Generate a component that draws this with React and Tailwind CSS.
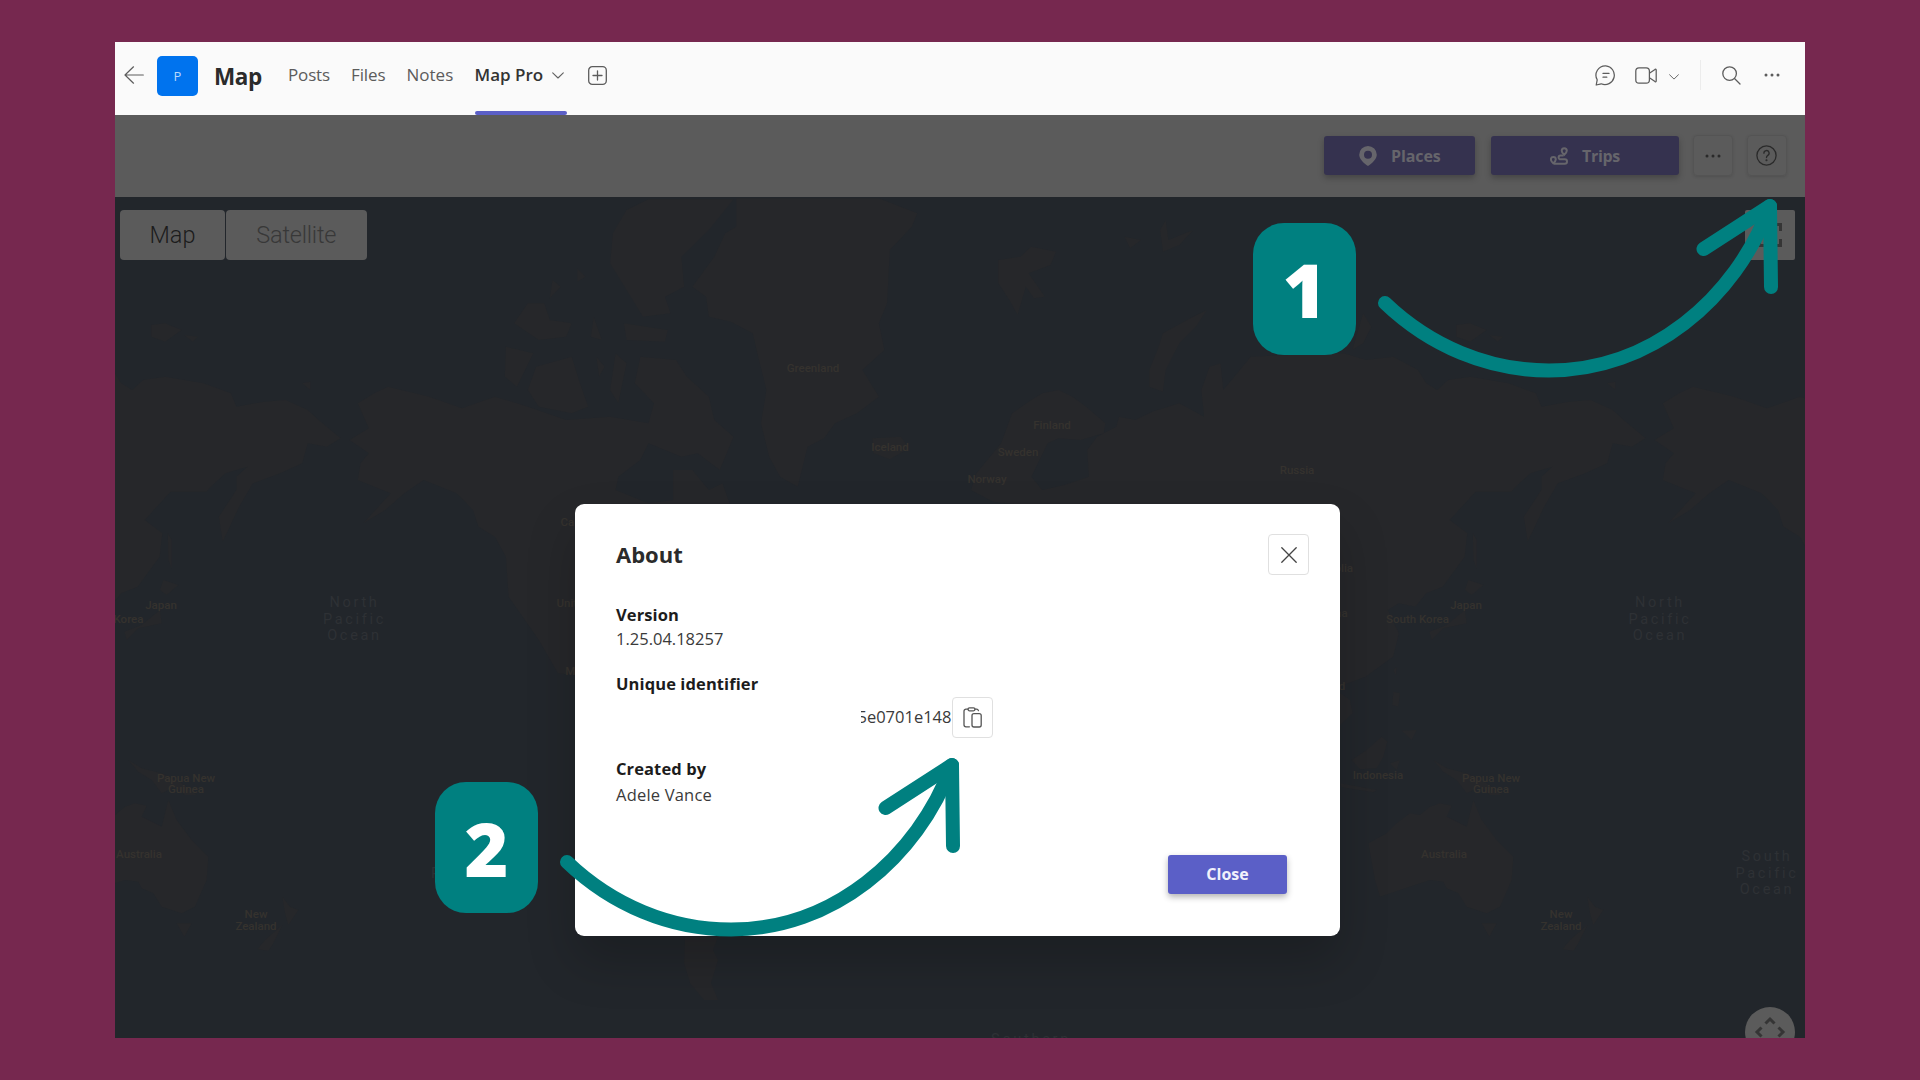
import React from 'react';

const LAND = '#26272a';

const LABELS = [
  [813, 368, 'Greenland'],
  [890, 447, 'Iceland'],
  [1052, 425, 'Finland'],
  [1018, 452, 'Sweden'],
  [987, 479, 'Norway'],
  [1297, 470, 'Russia'],
  [1466, 605, 'Japan'],
  [1417.5, 618.5, 'South Korea'],
  [1378, 774.5, 'Indonesia'],
  [1491, 777.5, 'Papua New'],
  [1491, 789, 'Guinea'],
  [1444, 854, 'Australia'],
  [1561, 914, 'New'],
  [1561, 926, 'Zealand'],
  [161, 605, 'Japan'],
  [112, 618.5, 'South Korea'],
  [186, 777.5, 'Papua New'],
  [186, 789, 'Guinea'],
  [139, 854, 'Australia'],
  [256, 914, 'New'],
  [256, 926, 'Zealand'],
  [580, 522, 'Canada'],
  [591, 603, 'United States'],
  [584, 671, 'Mexico'],
  [1329, 568, 'Mongolia'],
  [1333, 613, 'China'],
  [1323, 686, 'Thailand'],
];

const OCEANS = [
  [354.5, 601, 'North'],
  [354.5, 618, 'Pacific'],
  [354.5, 634.5, 'Ocean'],
  [1660, 601, 'North'],
  [1660, 618, 'Pacific'],
  [1660, 634.5, 'Ocean'],
  [1767, 855, 'South'],
  [1767, 872, 'Pacific'],
  [1767, 888.5, 'Ocean'],
  [437, 872, 'P'],
  [1031, 1038, 'Southern'],
];

const World = () => (
  <g id="world" fill={LAND}>
    {/* Eurasia, Svalbard, Novaya Zemlya */}
    <g transform="translate(960 190) scale(.5485 .3333)">
      <path d="M20 900L30 850L75 760L95 670L130 630L150 610L180 600L205 620L230 650L265 700L262 730L220 750L180 745L160 760L130 860L150 900L190 885L235 860L232 780L250 740L285 710L290 680L320 690L350 665L400 640L445 680L440 600L455 530L475 520L480 600L500 560L530 500L600 495L700 490L740 510L790 500L835 540L850 580L870 600L890 570L930 560L1000 580L1050 610L1060 650L1110 635L1150 630L1190 660L1210 690L1250 745L1225 770L1190 760L1180 820L1140 850L1090 880L1065 950L1035 1055L1028 980L1060 900L1060 860L1080 830L1040 850L1020 880L1005 905L940 905L915 950L893 990L925 1030L920 1100L880 1190L850 1210L830 1250L800 1240L780 1260L800 1330L790 1400L740 1460L692 1490L500 1500L400 1000L60 935Z" />
      <path d="M450 360L430 410L400 460L375 540L370 605L345 590L345 540L360 480L370 430L420 385Z" />
      <path d="M70 210L110 200L130 170L175 185L165 225L125 250L155 320L135 325L120 290L105 375L90 330L70 280Z" />
      <path d="M735 370L750 410L735 460L715 480ZM905 405L930 400L960 420L930 455L905 440ZM965 435L990 440L980 455ZM300 140L330 150L310 175ZM365 120L375 90L380 150L425 120L400 165L370 185ZM1180 580L1195 575L1195 600Z" />
      <path d="M935 1030L942 1050L942 1135L936 1110Z" />
    </g>
    {/* Oceania and South-East Asia */}
    <g transform="translate(1300 560) scale(.3333)">
      <path d="M205 850L260 820L290 790L330 760L360 765L390 740L420 730L455 737L440 770L500 800L520 720L545 780L590 840L640 890L635 960L600 1040L560 1060L500 1040L475 1000L440 985L430 965L390 960L300 990L240 1010L225 960Z" />
      <path d="M545 1090L590 1090L568 1130ZM862 1010L885 1040L910 1050L880 1095L870 1060ZM862 1095L835 1150L820 1172L787 1168L810 1140Z" />
      <path d="M400 600L440 625L500 640L560 670L605 705L570 705L540 680L500 700L470 660L430 635ZM155 600L200 570L245 530L262 545L250 590L230 625L180 628ZM280 395L300 400L295 440L277 435ZM305 512L350 510L335 540ZM270 610L300 600L290 630ZM120 670L230 690L220 697L125 682Z" />
      <path d="M505 60L550 75L515 105L495 90ZM495 150L500 190L430 205L395 240L388 215L440 195ZM280 330L290 320L288 345ZM115 395L150 420L158 460L120 495Z" />
    </g>
  </g>
);

const Americas = () => (
  <g id="americas" fill={LAND}>
    <g transform="translate(100 190) scale(.5485 .3333)">
      <path d="M470 640L500 610L525 590L600 620L660 655L720 620L780 650L850 690L930 680L1000 700L1010 640L975 580L985 500L1050 510L1070 560L1110 620L1120 690L1155 740L1130 840L1090 790L1060 800L1000 760L985 810L945 860L940 900L1000 940L1045 930L1045 840L1080 840L1110 900L1135 880L1150 950L1100 1000L1100 1500L835 1450L800 1350L745 1220L740 1100L720 1040L690 1010L680 960L650 910L590 870L555 910L520 960L480 1000L530 910L500 890L470 870L475 820L490 790L455 750L490 715Z" />
      <path d="M1160 25L1420 25L1490 70L1480 110L1440 180L1435 340L1420 400L1430 480L1390 540L1420 620L1380 670L1340 700L1320 745L1290 770L1272 890L1240 860L1220 800L1205 700L1215 600L1200 500L1190 430L1150 395L1110 380L1105 320L1080 290L1120 200L1140 130L1160 110Z" />
      <path d="M960 60L1000 28L1155 28L1110 120L1060 200L1065 290L1030 320L1040 370L990 380L960 300L930 220L935 130Z" />
      <path d="M755 400L780 340L810 340L820 390L860 400L850 440L800 450ZM870 235L885 260L870 275ZM825 270L840 290L820 325ZM740 470L790 490L760 590L738 560ZM795 530L860 500L875 580L890 650L860 670L800 650L780 600ZM955 400L1035 420L1030 455L960 450ZM900 380L915 450L895 440ZM905 500L920 530L910 560ZM940 490L960 520L945 640L930 600Z" />
      <path d="M1408 745L1460 740L1475 775L1440 808L1410 790Z" />
    </g>
    <path d="M685 937H718L713 950L718 960L711 983L718 1000L704 1000L690 983L684 963Z" />
  </g>
);

const WorldMap = () => (
  <svg className="block h-full w-full" viewBox="115 197 1690 841" preserveAspectRatio="none">
    <World />
    <use href="#world" x="-1305" />
    <Americas />
    <use href="#americas" x="1305" />
    <g fontFamily="Roboto, sans-serif" textAnchor="middle">
      {LABELS.map(([x, y, name]) => (
        <text key={`${name}-${x}`} x={x} y={y + 4} fontSize="11.5" fontWeight="500" fill="#35322e">
          {name}
        </text>
      ))}
      {OCEANS.map(([x, y, name]) => (
        <text key={`${name}-${x}-${y}`} x={x} y={y + 5.5} fontSize="14.5" letterSpacing="2.7" fill="#2e3135">
          {name}
        </text>
      ))}
    </g>
  </svg>
);

const Chevron = ({ className }) => (
  <svg className={className} viewBox="0 0 12 7" fill="none" stroke="currentColor" strokeWidth="1.1" strokeLinecap="round" strokeLinejoin="round">
    <path d="M.7.8L6 6L11.3.8" />
  </svg>
);

const Dots = ({ className }) => (
  <svg className={className} viewBox="0 0 16 4" fill="currentColor">
    <circle cx="2" cy="2" r="1.5" />
    <circle cx="8" cy="2" r="1.5" />
    <circle cx="14" cy="2" r="1.5" />
  </svg>
);

const Header = () => (
  <header className="flex h-[73px] shrink-0 items-start bg-[#fafafa] text-[17px] leading-6 text-[#5c5c5c]">
    <svg className="mt-6 ml-[9px] h-[18px] w-5" viewBox="0 0 20 18" fill="none" stroke="#5c5c5c" strokeWidth="1.2" strokeLinecap="round" strokeLinejoin="round">
      <path d="M9.5.8L1 9L9.5 17.2M1 9H19.3" />
    </svg>
    <div className="mt-[13.5px] ml-[13px] flex h-10 w-[41px] items-center justify-center rounded-[5px] bg-[#0073ee] text-[13px] text-[#b9d9fb]">
      P
    </div>
    <h1 className="mt-[19px] ml-4 w-[74px] text-[22.5px] leading-8 font-bold tracking-[-0.4px] text-[#2b2b2b]">Map</h1>
    <span className="mt-[21px] w-[63px] tracking-[-0.15px]">Posts</span>
    <span className="mt-[21px] w-[55.5px] tracking-[-0.1px]">Files</span>
    <span className="mt-[21px] w-[68px]">Notes</span>
    <div className="flex h-[72.5px] w-[92px] flex-col justify-between">
      <div className="mt-[21px] flex items-center gap-2 whitespace-nowrap text-[#333]">
        <span className="w-[69px] font-semibold">Map Pro</span>
        <Chevron className="h-[7px] w-3 text-[#616161]" />
      </div>
      <div className="h-1 rounded-full bg-[#5b5fc7]" />
    </div>
    <svg className="mt-[23.5px] ml-[21px] h-[19px] w-[19px]" viewBox="0 0 19 19" fill="none" stroke="#5c5c5c" strokeWidth="1.3" strokeLinecap="round">
      <rect x=".7" y=".7" width="17.6" height="17.6" rx="3.6" />
      <path d="M9.5 5V14M5 9.5H14" />
    </svg>

    <div className="mr-[25px] ml-auto flex h-[66px] items-center text-[#5c5c5c]">
      <svg className="h-[21px] w-[21px]" viewBox="0 0 21 21" fill="none" stroke="currentColor" strokeWidth="1.25" strokeLinecap="round" strokeLinejoin="round">
        <path d="M10.8.8A9.4 9.4 0 1 1 6.2 18.8L1.2 20L2.2 14.8A9.4 9.4 0 0 1 10.8.8ZM8 8.4H14M8 12.2H11.8" />
      </svg>
      <svg className="ml-[19px] h-[17px] w-[22px]" viewBox="0 0 22 17" fill="none" stroke="currentColor" strokeWidth="1.25" strokeLinejoin="round">
        <rect x=".8" y=".8" width="13.6" height="15.4" rx="3.2" />
        <path d="M14.4 6.2L20 2.4Q21.2 1.8 21.2 3V14Q21.2 15.2 20 14.6L14.4 10.8" />
      </svg>
      <Chevron className="mt-1 ml-3 h-[6px] w-[10px]" />
      <div className="ml-[21px] h-[30px] w-px bg-[#ececec]" />
      <svg className="ml-[21px] h-[19px] w-[19px]" viewBox="0 0 19 19" fill="none" stroke="currentColor" strokeWidth="1.3" strokeLinecap="round">
        <circle cx="7.6" cy="7.6" r="6.8" />
        <path d="M12.5 12.5L18 18" />
      </svg>
      <Dots className="ml-[23px] h-1 w-4" />
    </div>
  </header>
);

const Toolbar = () => (
  <div className="flex h-[82px] shrink-0 items-center justify-end bg-[#5b5b5b] pr-[18px] pb-px text-[16px] font-bold text-[#66656b]">
    <div className="mr-4 flex h-[39px] w-[151px] items-center rounded-[3px] bg-[#35324f] pl-[35px] shadow-[0_3px_6px_rgba(0,0,0,0.25)]">
      <svg className="h-5 w-[18px]" viewBox="0 0 18 20" fill="currentColor" fillRule="evenodd">
        <path d="M9 0A8.8 8.8 0 0 1 17.8 8.8C17.8 13 13 17.6 9 20C5 17.6.2 13 .2 8.8A8.8 8.8 0 0 1 9 0ZM9 4.8A4 4 0 1 0 9 12.8A4 4 0 1 0 9 4.8Z" />
      </svg>
      <span className="ml-[14px] tracking-[-0.1px]">Places</span>
    </div>
    <div className="mr-[14px] flex h-[39px] w-[188px] items-center rounded-[3px] bg-[#35324f] pl-[59px] shadow-[0_3px_6px_rgba(0,0,0,0.25)]">
      <svg className="h-[18px] w-[18px]" viewBox="0 0 18 18" fill="none" stroke="currentColor" strokeWidth="2">
        <path d="M3.3 10C5 10 5.8 11.2 5.8 12.4C5.8 13.8 4.4 15.3 3.3 16.4C2.2 15.3.9 13.8.9 12.4C.9 11.2 1.7 10 3.3 10Z" />
        <path d="M14.2 1.2C15.9 1.2 16.8 2.4 16.8 3.7C16.8 5.2 15.3 6.7 14.2 7.8C13 6.7 11.7 5.2 11.7 3.7C11.7 2.4 12.6 1.2 14.2 1.2Z" />
        <path d="M13.6 8.5H10.5A1.8 1.8 0 0 0 10.5 12.3H14.8A2.1 2.1 0 0 1 14.8 16.7H4" />
      </svg>
      <span className="ml-[14px] tracking-[-0.3px]">Trips</span>
    </div>
    <div className="mr-[14px] flex h-[41px] w-10 items-center justify-center rounded-[4px] border border-[#545454] text-[#2a2a2a] shadow-[0_1px_3px_rgba(0,0,0,0.12)]">
      <Dots className="h-1 w-4" />
    </div>
    <div className="flex h-[41px] w-10 items-center justify-center rounded-[4px] border border-[#545454] pr-px text-[#2a2a2a] shadow-[0_1px_3px_rgba(0,0,0,0.12)]">
      <svg className="h-[21px] w-[21px]" viewBox="0 0 21 21" fill="none" stroke="currentColor" strokeWidth="1.3" strokeLinecap="round">
        <circle cx="10.5" cy="10.5" r="9.6" />
        <path d="M7.9 8.2A2.6 2.6 0 1 1 11.8 10.4Q10.5 11.2 10.5 12.6" />
        <circle cx="10.5" cy="15.3" r=".4" fill="currentColor" />
      </svg>
    </div>
  </div>
);

const Field = ({ label, children, className }) => (
  <div className={className}>
    <div className="text-[16.5px] leading-6 font-bold tracking-[0.1px] text-[#1c1c1c]">{label}</div>
    {children}
  </div>
);

const AboutDialog = () => (
  <div className="absolute top-[461.5px] left-[460px] flex h-[432px] w-[765px] flex-col rounded-[9px] bg-white text-[#3a3a3a] shadow-[0_25px_50px_rgba(0,0,0,0.2)]">
    <div className="flex items-start justify-between pt-[30.5px] pr-[31px] pl-[41px]">
      <h2 className="mt-[4px] text-[22px] leading-8 font-bold text-[#2b2b2b]">About</h2>
      <button className="flex h-[41px] w-[41px] items-center justify-center rounded-[4px] border border-[#e0e0e0]">
        <svg className="h-4 w-4" viewBox="0 0 16 16" fill="none" stroke="#444" strokeWidth="1.3" strokeLinecap="round">
          <path d="M.8.8L15.2 15.2M15.2.8L.8 15.2" />
        </svg>
      </button>
    </div>
    <div className="pl-[41px] text-[16.5px] leading-6">
      <Field label="Version" className="mt-[27.5px]">
        <div className="mt-[0.5px]">1.25.04.18257</div>
      </Field>
      <Field label="Unique identifier" className="mt-[20.5px]">
        <div className="mt-[1px] flex items-center">
          <div className="ml-[245px] flex w-[90.5px] justify-end overflow-hidden whitespace-nowrap">5e0701e148</div>
          <button className="flex h-[41px] w-[41px] items-center justify-center rounded-[4px] border border-[#e0e0e0]">
            <svg className="h-[21px] w-[19px]" viewBox="0 0 19 21" fill="none" stroke="#555" strokeWidth="1.3" strokeLinejoin="round" strokeLinecap="round">
              <path d="M5 2.2H3A2 2 0 0 0 1 4.2V17.8A2 2 0 0 0 3 19.8H6.4M12 2.2H13.6A2 2 0 0 1 15.4 3.6" />
              <rect x="5" y=".8" width="7" height="3" rx="1.5" />
              <rect x="9" y="6.6" width="9.2" height="13.4" rx="2" />
            </svg>
          </button>
        </div>
      </Field>
      <Field label="Created by" className="mt-[19.5px]">
        <div className="mt-[1.5px] tracking-[0.2px]">Adele Vance</div>
      </Field>
    </div>
    <button className="mt-auto mr-[53px] mb-[42px] h-[39px] w-[119px] self-end rounded-[3px] bg-[#5b5fc7] text-[16px] font-bold text-[#f1f1fb] shadow-[0_3px_6px_rgba(0,0,0,0.3)]">
      Close
    </button>
  </div>
);

const Step = ({ number, className }) => (
  <div className={`absolute flex ${className}`}>
    <div className="flex h-[131.5px] w-[103px] items-center justify-center rounded-[31px] bg-[#008080] pt-[2px] text-[75px] leading-none font-extrabold text-white">
      {number}
    </div>
    <svg className="-mt-[25px] ml-[22px] h-[190px] w-[405px] overflow-visible" viewBox="1378 198 405 190" fill="none" stroke="#008080" strokeWidth="14" strokeLinecap="round" strokeLinejoin="round">
      <path d="M1385 303C1430 346 1488 370.5 1549 370.5C1650 370.5 1735 300 1770 206" />
      <path d="M1703.5 249L1770 206L1771 287" />
    </svg>
  </div>
);

export default function App() {
  return (
    <div className="h-[1080px] w-[1920px] overflow-hidden bg-[#76284f] px-[115px] pt-[42px] pb-[42px] font-['Open_Sans',sans-serif]">
      <div className="relative flex h-[996px] w-[1690px] flex-col">
        <Header />
        <Toolbar />
        <div className="relative h-[841px] overflow-hidden bg-[#22262b]">
          <WorldMap />
          <div className="absolute top-[13px] left-[5px] flex gap-px font-[Roboto] text-[23.5px] font-light">
            <div className="flex h-[50px] w-[105px] items-center justify-center rounded-[4px] bg-[#5b5b5b] pt-0.5 text-[#1c1c1c]">Map</div>
            <div className="flex h-[50px] w-[140.5px] items-center justify-center rounded-[4px] bg-[#5b5b5b] pt-0.5 tracking-[-0.2px] text-[#383838]">Satellite</div>
          </div>
          <div className="absolute top-[13px] right-[10.5px] flex h-[50px] w-[50px] items-center justify-center rounded-[2px] bg-[#5b5b5b]">
            <svg className="h-6 w-6" viewBox="0 0 24 24" fill="none" stroke="#353535" strokeWidth="3">
              <path d="M1.5 8V1.5H8M16 1.5H22.5V8M22.5 16V22.5H16M8 22.5H1.5V16" />
            </svg>
          </div>
          <div className="absolute right-[10.5px] -bottom-[19px] h-[50px] w-[50px] rounded-full bg-[#5b5b5b]">
            <svg className="h-full w-full" viewBox="0 0 50 50" fill="none" stroke="#353535" strokeWidth="3">
              <path d="M20.5 16.5L25 12L29.5 16.5M16.5 20.5L12 25L16.5 29.5M33.5 20.5L38 25L33.5 29.5" />
            </svg>
          </div>
        </div>
        <AboutDialog />
        <Step number="1" className="top-[181px] left-[1138px]" />
        <Step number="2" className="top-[739.5px] left-[320px]" />
      </div>
    </div>
  );
}
